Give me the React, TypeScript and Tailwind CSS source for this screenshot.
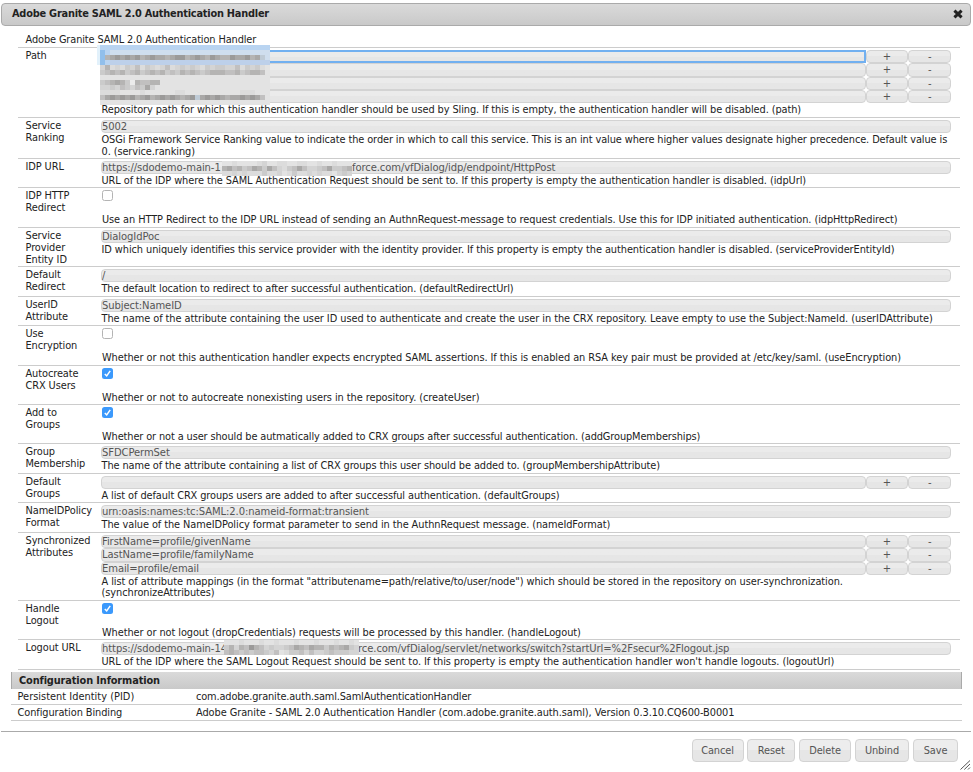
// Configuration dialog for the SAML 2.0 authentication handler
import type { ReactNode } from "react";

interface Row {
  label: string[];
  height: string;
  kind: "text" | "list" | "check";
  values?: string[];
  checked?: boolean;
  help: string[];
  helpClass?: string;
  mask?: ReactNode;
}

const SHADES: Record<string, string> = {
  "0": "#9b9a99",
  "1": "#a9a8a7",
  "2": "#b5b4b3",
  "3": "#c1c0c0",
  "4": "#cbcbcb",
  "5": "#d4d4d4",
  "6": "#dcdcdc",
  "7": "#e3e3e3",
  "8": "#ebebeb",
  b: "#b9d4f1",
  c: "#cfdeee",
  d: "#bdd0ea",
  e: "#91bfeb",
  f: "#bfcbd6",
};

// Redacted text: every character is one 5px cell
function Mosaic({ cells, className }: { cells: string[]; className: string }) {
  return (
    <svg
      className={`absolute ${className}`}
      width={cells[0].length * 5}
      height={cells.length * 5}
      shapeRendering="crispEdges"
      aria-hidden="true"
    >
      {cells.map((line, y) =>
        line.split("").map((c, x) => (
          <rect key={`${x}-${y}`} x={x * 5} y={y * 5} width="5" height="5" fill={SHADES[c]} />
        ))
      )}
    </svg>
  );
}

const PATH_CELLS = [
  "bbbbbbbbbbbbbbbbbbbbbbbbbbbbbbbbbb",
  "ebcccccccccccccccccccccccccccccccc",
  "e2101010210112100210120122011021fc",
  "ebdddddddddddddddddddddddddddddddd",
  "5265645364565365454564544553645467",
  "4323243243232434232343222332432237",
  "7777777777777777777777777777777777",
  "4321248233227777777777777777777777",
  "5545345341577777777777777777777777",
  "6666777767777776677777777777666777",
  "3101010210210101210f10101211010137",
  "7777777777777777777777777777777777",
];

const ROWS: Row[] = [
  {
    label: ["Path"],
    height: "h-[70px]",
    kind: "list",
    values: ["", "", "", ""],
    help: [
      "Repository path for which this authentication handler should be used by Sling. If this is empty, the authentication handler will be disabled. (path)",
    ],
    mask: (
      <>
        <span className="absolute left-[-4px] top-[-5px] h-[20px] w-[3px] bg-[#e2f1fb]" />
        <Mosaic cells={PATH_CELLS} className="left-[-1px] top-[-5px]" />
      </>
    ),
  },
  {
    label: ["Service", "Ranking"],
    height: "h-[41px]",
    kind: "text",
    values: ["5002"],
    help: [
      "OSGi Framework Service Ranking value to indicate the order in which to call this service. This is an int value where higher values designate higher precedence. Default value is",
      "0. (service.ranking)",
    ],
    helpClass: "tracking-[-0.1px]",
  },
  {
    label: ["IDP URL"],
    height: "h-[29px]",
    kind: "text",
    values: ["https://sdodemo-main-1|force.com/vfDialog/idp/endpoint/HttpPost"],
    help: [
      "URL of the IDP where the SAML Authentication Request should be sent to. If this property is empty the authentication handler is disabled. (idpUrl)",
    ],
    helpClass: "tracking-[-0.075px]",
    mask: (
      <Mosaic
        cells={["77677776577667766776776777", "21324312413564313554314432", "66565666466576466565667545"]}
        className="left-[121px] top-0"
      />
    ),
  },
  {
    label: ["IDP HTTP", "Redirect"],
    height: "h-[40px]",
    kind: "check",
    help: [
      "Use an HTTP Redirect to the IDP URL instead of sending an AuthnRequest-message to request credentials. Use this for IDP initiated authentication. (idpHttpRedirect)",
    ],
    helpClass: "tracking-[-0.08px]",
  },
  {
    label: ["Service", "Provider", "Entity ID"],
    height: "h-[39px]",
    kind: "text",
    values: ["DialogIdPoc"],
    help: [
      "ID which uniquely identifies this service provider with the identity provider. If this property is empty the authentication handler is disabled. (serviceProviderEntityId)",
    ],
    helpClass: "tracking-[-0.075px]",
  },
  {
    label: ["Default", "Redirect"],
    height: "h-[30px]",
    kind: "text",
    values: ["/"],
    help: ["The default location to redirect to after successful authentication. (defaultRedirectUrl)"],
    helpClass: "tracking-[-0.11px]",
  },
  {
    label: ["UserID", "Attribute"],
    height: "h-[29px]",
    kind: "text",
    values: ["Subject:NameID"],
    help: [
      "The name of the attribute containing the user ID used to authenticate and create the user in the CRX repository. Leave empty to use the Subject:NameId. (userIDAttribute)",
    ],
    helpClass: "tracking-[-0.06px]",
  },
  {
    label: ["Use", "Encryption"],
    height: "h-[40px]",
    kind: "check",
    help: [
      "Whether or not this authentication handler expects encrypted SAML assertions. If this is enabled an RSA key pair must be provided at /etc/key/saml. (useEncryption)",
    ],
    helpClass: "tracking-[-0.07px]",
  },
  {
    label: ["Autocreate", "CRX Users"],
    height: "h-[39px]",
    kind: "check",
    checked: true,
    help: ["Whether or not to autocreate nonexisting users in the repository. (createUser)"],
    helpClass: "tracking-[-0.07px]",
  },
  {
    label: ["Add to", "Groups"],
    height: "h-[39px]",
    kind: "check",
    checked: true,
    help: [
      "Whether or not a user should be autmatically added to CRX groups after successful authentication. (addGroupMemberships)",
    ],
    helpClass: "tracking-[-0.115px]",
  },
  {
    label: ["Group", "Membership"],
    height: "h-[30px]",
    kind: "text",
    values: ["SFDCPermSet"],
    help: [
      "The name of the attribute containing a list of CRX groups this user should be added to. (groupMembershipAttribute)",
    ],
    helpClass: "tracking-[-0.1px]",
  },
  {
    label: ["Default", "Groups"],
    height: "h-[29px]",
    kind: "list",
    values: [""],
    help: ["A list of default CRX groups users are added to after successful authentication. (defaultGroups)"],
    helpClass: "tracking-[-0.1px]",
  },
  {
    label: ["NameIDPolicy", "Format"],
    height: "h-[30px]",
    kind: "text",
    values: ["urn:oasis:names:tc:SAML:2.0:nameid-format:transient"],
    help: ["The value of the NameIDPolicy format parameter to send in the AuthnRequest message. (nameIdFormat)"],
    helpClass: "tracking-[-0.08px]",
  },
  {
    label: ["Synchronized", "Attributes"],
    height: "h-[68px]",
    kind: "list",
    values: ["FirstName=profile/givenName", "LastName=profile/familyName", "Email=profile/email"],
    help: [
      'A list of attribute mappings (in the format "attributename=path/relative/to/user/node") which should be stored in the repository on user-synchronization.',
      "(synchronizeAttributes)",
    ],
    helpClass: "tracking-[-0.065px]",
  },
  {
    label: ["Handle", "Logout"],
    height: "h-[39px]",
    kind: "check",
    checked: true,
    help: ["Whether or not logout (dropCredentials) requests will be processed by this handler. (handleLogout)"],
    helpClass: "tracking-[-0.08px]",
  },
  {
    label: ["Logout URL"],
    height: "h-[30px]",
    kind: "text",
    values: ["https://sdodemo-main-14|orce.com/vfDialog/servlet/networks/switch?startUrl=%2Fsecur%2Flogout.jsp"],
    help: [
      "URL of the IDP where the SAML Logout Request should be sent to. If this property is empty the authentication handler won't handle logouts. (logoutUrl)",
    ],
    helpClass: "tracking-[-0.07px]",
    mask: (
      <Mosaic
        cells={["777677767767776777677767767", "425230235455431231224232145", "323434334537644353554344455"]}
        className="left-[123px] top-[-2px]"
      />
    ),
  },
];

const BOX =
  "h-[13.3px] rounded-[4px] border border-[#d3d3d3] bg-linear-to-b from-[#ebebeb] from-50% to-[#e6e6e6] to-50% text-[#555555]";

// A bar in the value separates the parts before and after the redaction
function Value({ text }: { text: string }) {
  const [head, tail] = text.split("|");
  return (
    <span className="flex whitespace-nowrap">
      <span className={tail ? "w-[250px] shrink-0" : ""}>{head}</span>
      {tail && <span>{tail}</span>}
    </span>
  );
}

function Checkbox({ checked }: { checked?: boolean }) {
  return (
    <span
      className={`ml-px flex size-[11px] items-center justify-center rounded-[2.5px] ${
        checked ? "bg-[#3b99fc]" : "border border-[#b4b4b4] bg-white"
      }`}
    >
      {checked && (
        <svg width="9" height="9" viewBox="0 0 9 9" fill="none" stroke="white" strokeWidth="1.5">
          <path d="M1.8 4.9 L3.7 6.9 L7.2 1.9" />
        </svg>
      )}
    </span>
  );
}

function Property({ row, focused }: { row: Row; focused?: boolean }) {
  const isCheck = row.kind === "check";
  return (
    <div className={`flex border-b border-[#cccccc] ${row.height}`}>
      <div className="w-[83px] shrink-0 pl-[7.5px] pt-[2px] leading-[11.8px]">
        {row.label.map((line) => (
          <div key={line}>{line}</div>
        ))}
      </div>
      <div className="relative mt-[2px] w-[850px] shrink-0 whitespace-nowrap">
        {isCheck ? (
          <div className="h-[24px]">
            <Checkbox checked={row.checked} />
          </div>
        ) : (
          row.values?.map((value, i) => (
            <div key={i} className="flex text-[10px] leading-[12px] tracking-[-0.09px]">
              <div
                className={`${BOX} flex-1 ${
                  focused && i === 0 ? "relative z-10 rounded-none outline-2 -outline-offset-2 outline-[#72b0f0]" : ""
                }`}
              >
                <Value text={value} />
              </div>
              {row.kind === "list" &&
                ["+", "-"].map((sign) => (
                  <button key={sign} type="button" className={`${BOX} w-[42.7px] text-center`}>
                    {sign}
                  </button>
                ))}
            </div>
          ))
        )}
        <div className="absolute left-0 top-0 z-20">{row.mask}</div>
        <div className={`relative z-30 ${isCheck ? "pl-px" : "pl-[0.5px] pt-[0.7px]"} ${row.helpClass ?? ""}`}>
          {row.help.map((line) => (
            <div key={line}>{line}</div>
          ))}
        </div>
      </div>
    </div>
  );
}

export default function App() {
  return (
    <div className="relative h-[772px] w-[973px] overflow-hidden bg-white font-['DejaVu_Sans',Verdana,sans-serif] text-[9.8px] leading-[11.75px] tracking-[-0.09px] text-[#222222]">
      <header className="ml-px flex h-[25px] w-[970px] items-center">
        <div className="mt-[3px] flex h-[23px] w-full items-center justify-between rounded-[4px] border border-[#aaaaaa] bg-linear-to-b from-[#dadada] to-[#c9c9c9] pl-[10px] pr-[7px]">
          <h1 className="font-bold tracking-[-0.22px]">Adobe Granite SAML 2.0 Authentication Handler</h1>
          <svg width="10" height="10" viewBox="0 0 10 10" stroke="#222222" strokeWidth="3">
            <path d="M1.4 1.6 L8.6 8.4 M8.6 1.6 L1.4 8.4" />
          </svg>
        </div>
      </header>

      <main className="ml-[18px] w-[942px]">
        <div className="h-[23px] border-b border-[#cccccc] pl-[7.5px] pt-[9px] tracking-[-0.12px]">
          Adobe Granite SAML 2.0 Authentication Handler
        </div>
        {ROWS.map((row, i) => (
          <Property key={row.label.join(" ")} row={row} focused={i === 0} />
        ))}
      </main>

      <section className="ml-[11px] mt-[2px] w-[951px]">
        <h2 className="flex h-[17px] items-center border-x border-[#aaaaaa] bg-linear-to-b from-[#dadada] to-[#c9c9c9] pl-[7px] font-bold tracking-[-0.13px]">
          Configuration Information
        </h2>
        <div className="flex h-[16px] items-center border-b border-[#cccccc] pl-[6.5px] pt-px">
          <span className="w-[178.5px] tracking-[0.02px]">Persistent Identity (PID)</span>
          <span className="tracking-[-0.14px]">com.adobe.granite.auth.saml.SamlAuthenticationHandler</span>
        </div>
        <div className="flex h-[16px] items-center border-b border-[#cccccc] pl-[6.5px] pt-px">
          <span className="w-[178.5px]">Configuration Binding</span>
          <span className="tracking-[-0.07px]">
            Adobe Granite - SAML 2.0 Authentication Handler (com.adobe.granite.auth.saml), Version 0.3.10.CQ600-B0001
          </span>
        </div>
      </section>

      <footer className="ml-px mt-[10px] flex w-[970px] justify-end gap-[3.75px] border-t border-[#aaaaaa] pr-[13px] pt-[7px]">
        {[
          ["Cancel", "w-[52px]"],
          ["Reset", "w-[48px]"],
          ["Delete", "w-[52px]"],
          ["Unbind", "w-[54.5px]"],
          ["Save", "w-[45px]"],
        ].map(([name, width]) => (
          <button
            key={name}
            type="button"
            className={`h-[23px] rounded-[4px] border border-[#d3d3d3] bg-linear-to-b from-[#ededed] from-50% to-[#e6e6e6] to-50% text-[#555555] ${width}`}
          >
            {name}
          </button>
        ))}
      </footer>

      {/* Resize grip */}
      <svg className="absolute bottom-[2px] right-[2px]" width="11" height="10" viewBox="0 0 11 10" stroke="#555555" strokeWidth="1">
        <path d="M0.5 9.5 L10 0.5 M4.3 9.5 L10 4 M8 9.5 L10 7.5" />
      </svg>
    </div>
  );
}
